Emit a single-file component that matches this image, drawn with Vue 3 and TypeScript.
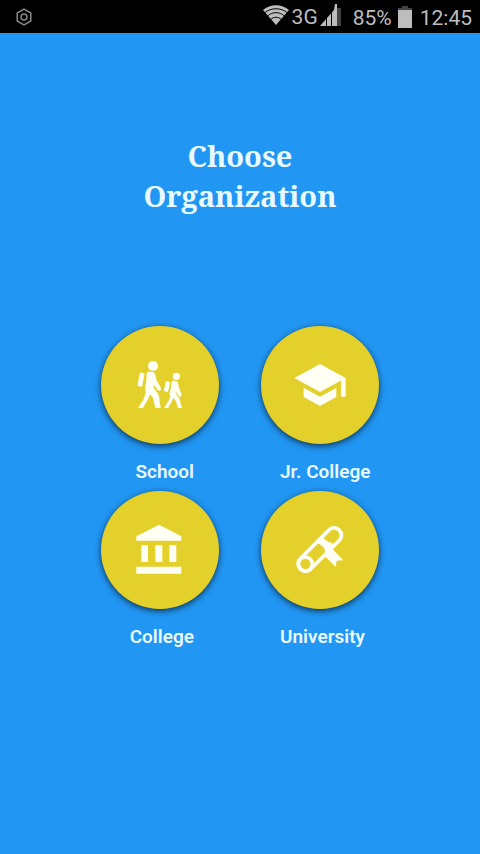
<script setup lang="ts">
type Icon = 'school' | 'junior' | 'college' | 'university'

interface Organization {
  id: Icon
  name: string
}

const organizations: Organization[] = [
  { id: 'school', name: 'School' },
  { id: 'junior', name: 'Jr. College' },
  { id: 'college', name: 'College' },
  { id: 'university', name: 'University' },
]
</script>

<template>
  <div class="screen">
    <header class="status">
      <svg class="notice" viewBox="0 0 18 18" aria-hidden="true">
        <path d="M9 1.2 15.8 5v8L9 16.8 2.2 13V5z" />
        <circle cx="9" cy="9" r="3" />
      </svg>
      <div class="indicators">
        <svg class="wifi" viewBox="0 0 26 20" aria-hidden="true">
          <path class="fill" d="M13 20 0 5C7-1.500 19-1.500 26 5z" />
          <path class="cut" d="M2 7.500C8 2.500 18 2.500 24 7.500M4.500 11C9.500 6.500 16.500 6.500 21.500 11M7.500 14.500C11 11.500 15 11.500 18.500 14.500" />
        </svg>
        <span class="network">3G</span>
        <svg class="signal" viewBox="0 0 22 22" aria-hidden="true">
          <path class="dim" d="M17 4h4v18h-4z" />
          <path class="fill" d="M0 22 14 6 15 0h2v22z" />
          <path class="cut" d="M6.500 10v12M11.500 6v16" />
        </svg>
        <span class="level">85%</span>
        <svg class="battery" viewBox="0 0 14 22" aria-hidden="true">
          <path class="dim" d="M4 0h6v2h4v4H0V2h4z" />
          <path class="fill" d="M0 4h14v18H0z" />
        </svg>
        <time class="clock">12:45</time>
      </div>
    </header>

    <main class="content">
      <h1 class="title">Choose<br />Organization</h1>
      <div class="choices">
        <div v-for="item in organizations" :key="item.id" class="choice">
          <button :id="item.id" class="round" type="button" :aria-labelledby="item.id + '-label'">
            <svg v-if="item.id === 'school'" class="icon" viewBox="0 0 180 180" aria-hidden="true">
              <circle cx="69" cy="33" r="15" />
              <path d="M34 53 42 55Q44 56 43 59L37 92Q36 95 33 95L25 93Q22 92 23 89L29 56Q30 52 34 53z" />
              <path d="M50 54Q53 49 60 50L68 51Q73 52 75 58L80 76 93 99Q95 105 90 107 86 108 83 104L71 90 70 97 83 115Q86 120 87 124L92 159H76L69 129 60 118 53 135Q51 140 47 144L39 159H24L40 134 48 111Q44 107 45 101L49 77z" />
              <circle cx="139" cy="64" r="11" />
              <path d="M112 79 118 80Q120 81 120 84L115 108Q114 111 111 111L104 109Q101 108 102 105L107 81Q108 78 112 79z" />
              <path d="M125 79Q127 76 133 77L139 78Q143 79 144 84L147 98 155 118Q156 123 152 125 148 126 146 122L138 111 137 115 148 130 156 159H144L137 137 130 128 126 139 114 159H102L115 139 121 124Q117 121 119 115L123 97z" />
            </svg>
            <svg v-else-if="item.id === 'junior'" class="icon cap" viewBox="0 0 24 24" aria-hidden="true">
              <path d="M5 13.180v4L12 21l7-3.820v-4L12 17zM12 3 1 9l11 6 9-4.910V17h2V9z" />
            </svg>
            <svg v-else-if="item.id === 'college'" class="icon" viewBox="0 0 180 180" aria-hidden="true">
              <path d="M87 14 154 49V62H19V49zM34 76H54V126H34zM76 76H97V126H76zM118 76H139V126H118zM19 140H154V161H19z" />
            </svg>
            <svg v-else class="icon" viewBox="0 0 180 180" aria-hidden="true">
              <g class="roll">
                <path d="M30 117 118 29A22 22 0 0 1 149 60L61 148A22 22 0 0 1 30 117z" />
                <circle cx="46" cy="132" r="21" />
              </g>
              <path d="M78 67 97 49Q107 64 122 68 134 72 140 75L128 88 160 121 140 122 137 141 104 108Q109 88 96 78 90 72 78 67z" />
            </svg>
          </button>
          <label :id="item.id + '-label'" class="name" :for="item.id">{{ item.name }}</label>
        </div>
      </div>
    </main>
  </div>
</template>

<style>
body {
  background: #2196f3;
}
</style>

<style scoped>
.screen {
  min-height: 100vh;
  background: #2196f3;
  font-family: Roboto, sans-serif;
}

.status {
  display: flex;
  align-items: center;
  justify-content: space-between;
  box-sizing: border-box;
  height: 33px;
  padding: 0 8px 0 15px;
  background: #000;
  color: #bdbdbd;
  font-size: 21px;
  line-height: 24px;
}

.notice {
  width: 18px;
  height: 18px;
  fill: none;
  stroke: #858585;
  stroke-width: 1.5;
}

.indicators {
  display: flex;
  align-items: center;
}

.level,
.clock {
  padding-top: 2px;
}

.wifi {
  width: 26px;
  height: 20px;
  margin: 0 3px 4px 0;
}

.signal {
  width: 22px;
  height: 22px;
  margin: 0 11px 4px 2px;
}

.battery {
  width: 14px;
  height: 22px;
  margin: 0 8px 0 6px;
}

.fill {
  fill: #bdbdbd;
}

.dim {
  fill: #444;
}

.cut {
  fill: none;
  stroke: #000;
  stroke-width: 1;
}

.content {
  padding-top: 103px;
}

.title {
  margin: 0;
  color: #e8faff;
  font-family: "Noto Serif", "Droid Serif", "DejaVu Serif Condensed", "DejaVu Serif", serif;
  font-size: 29px;
  font-weight: 700;
  line-height: 40px;
  text-align: center;
}

.choices {
  display: grid;
  grid-template-columns: repeat(2, 160px);
  justify-content: center;
  row-gap: 6px;
  padding-top: 110px;
}

.choice {
  display: flex;
  flex-direction: column;
  align-items: center;
  gap: 15px;
}

.round {
  display: flex;
  align-items: center;
  justify-content: center;
  width: 118px;
  height: 118px;
  padding: 0;
  border: 0;
  border-radius: 50%;
  background: #e4d02b;
  box-shadow: 0 2px 6px rgba(0, 0, 0, 0.65);
  cursor: pointer;
}

.icon {
  width: 60px;
  height: 60px;
  fill: #fffff4;
}

.cap {
  width: 56px;
  height: 56px;
}

.roll {
  fill: none;
  stroke: #fffff4;
  stroke-width: 11;
}

.name {
  box-sizing: border-box;
  width: 100%;
  padding: 0 46px 0 40px;
  color: #e8faff;
  font-size: 19px;
  font-weight: 600;
  line-height: 26px;
  white-space: nowrap;
}

.choice:nth-child(odd) .name {
  text-align: right;
}
</style>
